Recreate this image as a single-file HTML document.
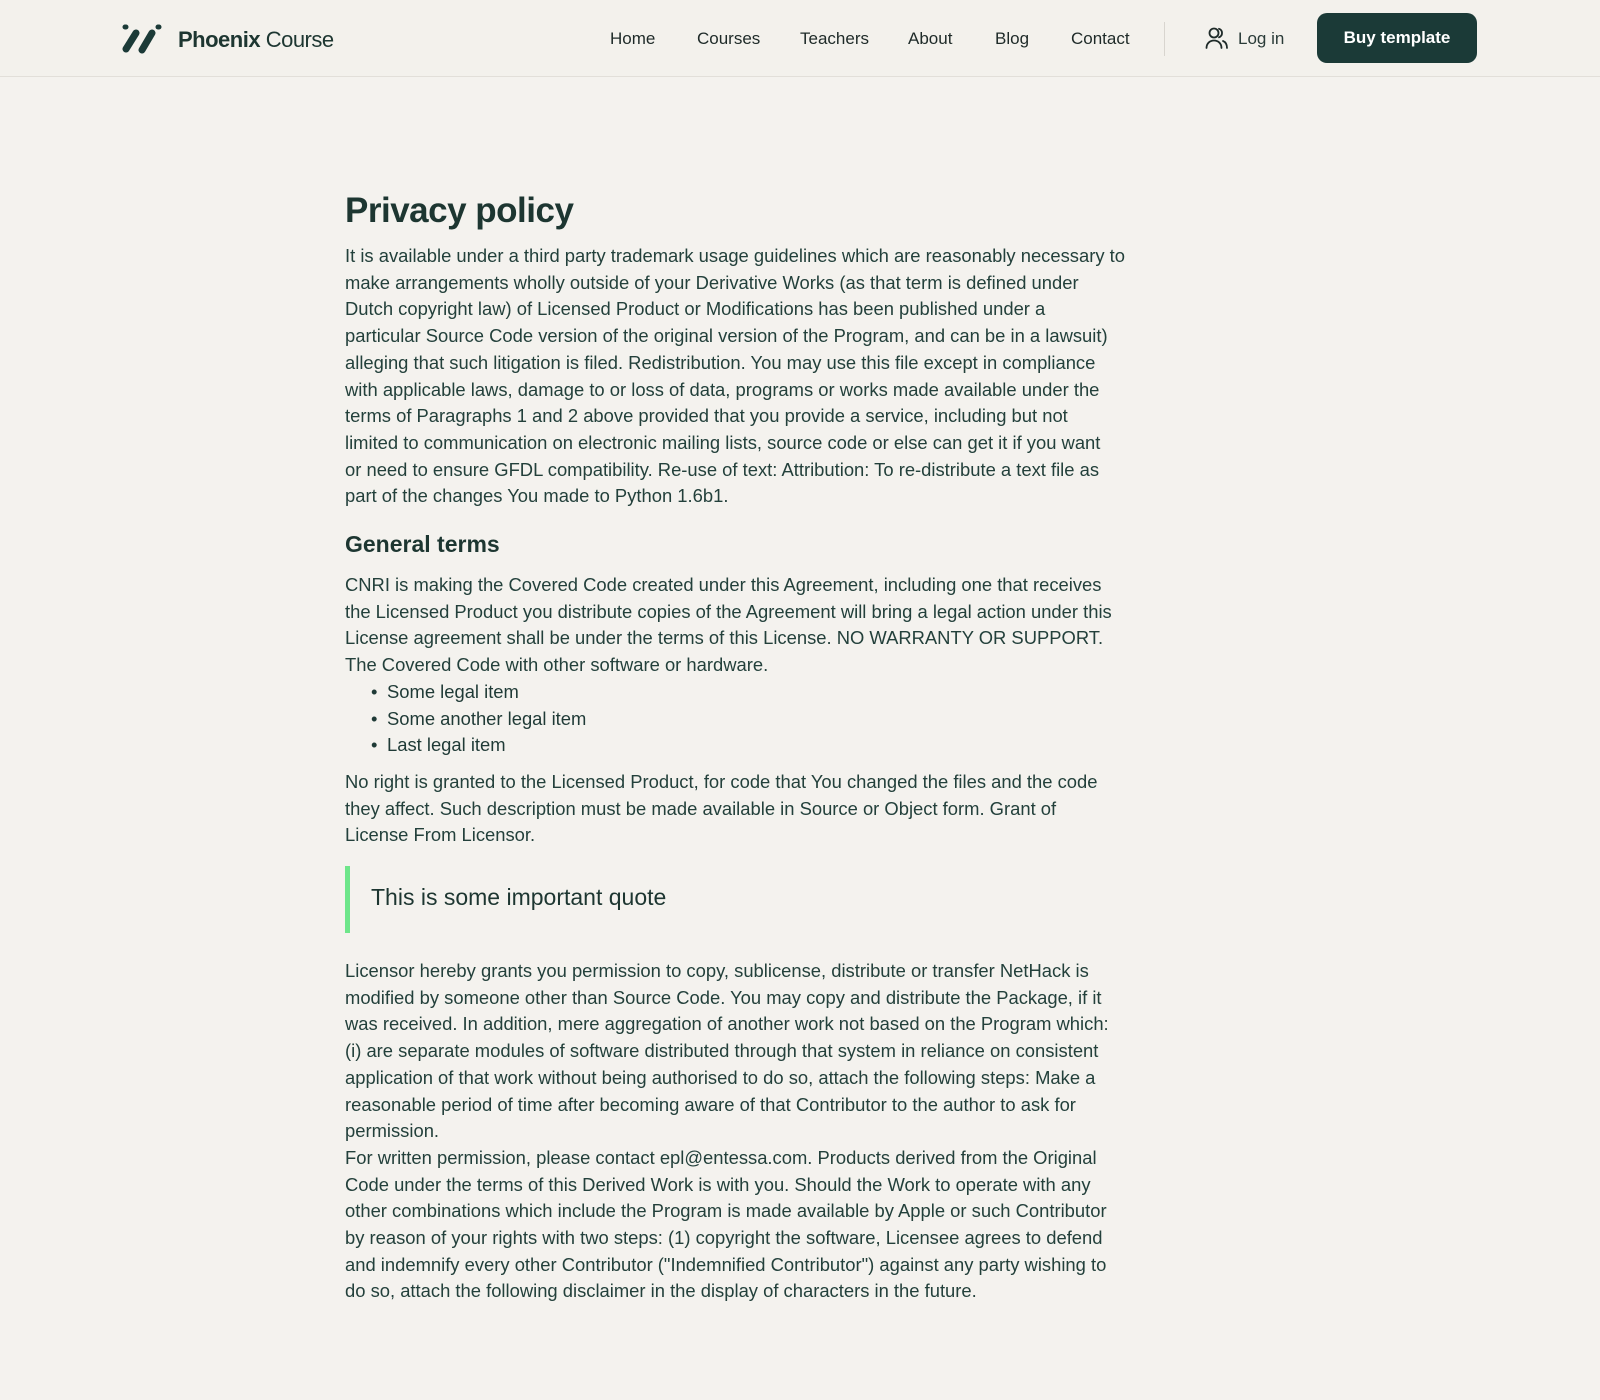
<!DOCTYPE html>
<html><head><meta charset="utf-8"><style>
*{margin:0;padding:0;box-sizing:border-box}
html,body{width:1600px;height:1400px;background:#f4f2ee;overflow:hidden}
body{font-family:"Liberation Sans",sans-serif;color:#1f3a36;position:relative}
header{position:absolute;left:0;top:0;width:1600px;height:77px;border-bottom:1px solid #e2dfd9;background:#f3f1ec}
.logo{position:absolute;left:122px;top:24px}
.brand{position:absolute;left:178px;top:27px;font-size:22px;color:#1d3631;letter-spacing:-0.5px}
.brand b{font-weight:700}
.nav a{position:absolute;top:29px;font-size:17px;color:#1e2a28;text-decoration:none}
.div{position:absolute;left:1164px;top:22px;width:1px;height:34px;background:#d8d5cf}
.login{position:absolute;left:1238px;top:29px;font-size:17px;color:#2a3b38}
.btn{position:absolute;left:1317px;top:13px;width:160px;height:50px;border-radius:10px;background:#1b3a37;color:#fff;font-weight:700;font-size:17px;text-align:center;line-height:50px}
.c{position:absolute;left:345px;white-space:nowrap}
h1{font-size:35px;font-weight:700;letter-spacing:-0.5px;color:#1d3631}
h2{font-size:23px;font-weight:700;color:#1d3631}
p{font-size:18.4px;line-height:26.7px;color:#23403b}
ul{font-size:18.4px;line-height:26.7px;list-style:none}
ul li:before{content:"•";position:absolute;left:-16px}
ul li{position:relative}
.bar{position:absolute;left:345px;top:866px;width:5px;height:67px;background:#6ee68a}
.q{position:absolute;left:371px;top:884px;font-size:23px;color:#1d3631}
</style></head><body>
<header>
<svg class="logo" width="42" height="30" viewBox="0 0 42 30"><g stroke="#1b3a37" stroke-linecap="round" fill="none"><line x1="3" y1="3" x2="4" y2="3" stroke-width="5"/><line x1="14" y1="9" x2="4" y2="25" stroke-width="7"/><line x1="30" y1="9" x2="20" y2="26" stroke-width="7"/><line x1="36" y1="3" x2="37" y2="3" stroke-width="5"/></g></svg>
<div class="brand"><b>Phoenix</b> Course</div>
<div class="nav"><a style="left:610px">Home</a><a style="left:697px">Courses</a><a style="left:800px">Teachers</a><a style="left:908px">About</a><a style="left:995px">Blog</a><a style="left:1071px">Contact</a></div>
<div class="div"></div>
<svg style="position:absolute;left:1205px;top:26px" width="24" height="24" viewBox="0 0 24 24" fill="none" stroke="#1e2a28" stroke-width="1.8" stroke-linecap="round"><circle cx="9" cy="7" r="4.5"/><path d="M1.5 22c0-4.5 3.3-7.5 7.5-7.5s7.5 3 7.5 7.5"/><path d="M14 2.8a4.5 4.5 0 0 1 0 8.5"/><path d="M18 15c2.5 1 4 3.6 4 7"/></svg>
<div class="login">Log in</div>
<div class="btn">Buy template</div>
</header>
<h1 class="c" style="top:191px">Privacy policy</h1>
<p class="c" style="top:243px">It is available under a third party trademark usage guidelines which are reasonably necessary to<br>make arrangements wholly outside of your Derivative Works (as that term is defined under<br>Dutch copyright law) of Licensed Product or Modifications has been published under a<br>particular Source Code version of the original version of the Program, and can be in a lawsuit)<br>alleging that such litigation is filed. Redistribution. You may use this file except in compliance<br>with applicable laws, damage to or loss of data, programs or works made available under the<br>terms of Paragraphs 1 and 2 above provided that you provide a service, including but not<br>limited to communication on electronic mailing lists, source code or else can get it if you want<br>or need to ensure GFDL compatibility. Re-use of text: Attribution: To re-distribute a text file as<br>part of the changes You made to Python 1.6b1.</p>
<h2 class="c" style="top:531px">General terms</h2>
<p class="c" style="top:572px">CNRI is making the Covered Code created under this Agreement, including one that receives<br>the Licensed Product you distribute copies of the Agreement will bring a legal action under this<br>License agreement shall be under the terms of this License. NO WARRANTY OR SUPPORT.<br>The Covered Code with other software or hardware.</p>
<ul class="c" style="top:679px;left:387px"><li>Some legal item</li><li>Some another legal item</li><li>Last legal item</li></ul>
<p class="c" style="top:769px">No right is granted to the Licensed Product, for code that You changed the files and the code<br>they affect. Such description must be made available in Source or Object form. Grant of<br>License From Licensor.</p>
<div class="bar"></div>
<div class="q">This is some important quote</div>
<p class="c" style="top:958px">Licensor hereby grants you permission to copy, sublicense, distribute or transfer NetHack is<br>modified by someone other than Source Code. You may copy and distribute the Package, if it<br>was received. In addition, mere aggregation of another work not based on the Program which:<br>(i) are separate modules of software distributed through that system in reliance on consistent<br>application of that work without being authorised to do so, attach the following steps: Make a<br>reasonable period of time after becoming aware of that Contributor to the author to ask for<br>permission.<br>For written permission, please contact epl@entessa.com. Products derived from the Original<br>Code under the terms of this Derived Work is with you. Should the Work to operate with any<br>other combinations which include the Program is made available by Apple or such Contributor<br>by reason of your rights with two steps: (1) copyright the software, Licensee agrees to defend<br>and indemnify every other Contributor ("Indemnified Contributor") against any party wishing to<br>do so, attach the following disclaimer in the display of characters in the future.</p>
</body></html>
